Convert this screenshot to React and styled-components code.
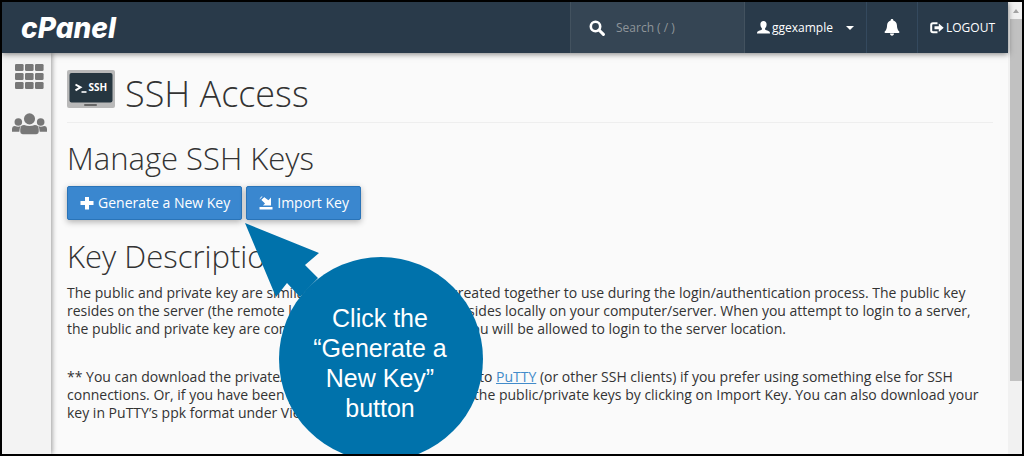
import styled, { createGlobalStyle } from "styled-components";

const GlobalStyle = createGlobalStyle`
  * {
    box-sizing: border-box;
  }
  body {
    margin: 0;
    background: #fafafa;
    color: #333;
    font-family: "Open Sans", "Noto Sans", sans-serif;
    font-size: 14px;
    line-height: 18px;
  }
`;

const Frame = styled.div`
  display: flex;
  height: 100vh;
  border: 2px solid #000;
  overflow: hidden;
`;

const Page = styled.div`
  flex: 1;
  min-width: 0;
  display: flex;
  flex-direction: column;
`;

const Header = styled.header`
  position: relative;
  z-index: 1;
  display: flex;
  flex: none;
  height: 51px;
  background: #293a4a;
  color: #fff;
  box-shadow: 0 1px 6px rgba(0, 0, 0, 0.5);
`;

const Brand = styled.a`
  display: flex;
  align-items: center;
  margin-right: auto;
  padding-left: 19px;
  color: #fff;
  font-family: Inter, sans-serif;
  font-size: 28px;
  font-style: italic;
  font-weight: 800;
  text-decoration: none;
`;

const Search = styled.label`
  display: flex;
  align-items: center;
  gap: 11px;
  width: 175px;
  padding-left: 18px;
  background: #354554;
  border: solid #43525f;
  border-width: 0 1px;
`;

const SearchInput = styled.input`
  flex: 1;
  min-width: 0;
  padding: 0;
  border: 0;
  outline: 0;
  background: transparent;
  color: #fff;
  font: inherit;
  font-size: 12px;

  &::placeholder {
    color: #8f959a;
    opacity: 1;
  }
`;

const HeaderButton = styled.button`
  display: flex;
  align-items: center;
  justify-content: center;
  gap: 2px;
  width: ${({ $width }) => $width};
  padding: 0;
  border: 0;
  border-right: 1px solid ${({ $last }) => ($last ? "transparent" : "#34495e")};
  background: none;
  color: #fff;
  font: inherit;
  font-size: 12px;
  text-decoration: none;
`;

const UserName = styled.span`
  margin-right: 11px;
`;

const Body = styled.div`
  flex: 1;
  min-height: 0;
  display: flex;
`;

const Sidebar = styled.nav`
  display: flex;
  flex: none;
  flex-direction: column;
  align-items: center;
  gap: 24px;
  width: 49px;
  padding: 11px 0 0 6px;
  background: #f3f3f3;
  box-shadow: 1px 0 5px rgba(0, 0, 0, 0.4);
`;

const SidebarLink = styled.a`
  display: flex;
  color: #777;
`;

const Main = styled.main`
  position: relative;
  flex: 1;
  min-width: 0;
  padding: 17px 15px 0 16px;
`;

const TitleBar = styled.div`
  display: flex;
  gap: 10px;
  height: 53px;
  margin-bottom: 19px;
  border-bottom: 1px solid #eee;
`;

const Title = styled.h1`
  margin: 4px 0 0;
  font-size: 36px;
  font-weight: 300;
  line-height: 40px;
`;

const Heading = styled.h2`
  margin: 0 0 11px;
  font-size: 31px;
  font-weight: 300;
  line-height: 33px;
`;

const Buttons = styled.div`
  display: flex;
  gap: 4px;
  margin-bottom: 20px;
`;

const Button = styled.button`
  display: flex;
  align-items: center;
  gap: 4px;
  height: 34px;
  padding: 0 11px 0 12px;
  border: 1px solid #2a74b8;
  border-radius: 2px;
  background: #3a87cf;
  color: #fff;
  font: inherit;
  box-shadow: 0 2px 6px rgba(0, 0, 0, 0.3);
`;

const Paragraph = styled.p`
  margin: 0 0 30px;
`;

const PuttyLink = styled.a`
  color: #428bca;
  text-decoration: underline;
`;

const Callout = styled.div`
  position: absolute;
  top: 170px;
  left: 194px;
  width: 238px;
  height: 238px;
`;

const CalloutText = styled.div`
  position: absolute;
  top: 80px;
  left: 33px;
  width: 204px;
  color: #fff;
  font-family: "Liberation Sans", Arial, sans-serif;
  font-size: 25px;
  line-height: 30px;
  text-align: center;
`;

const ScrollTrack = styled.div`
  display: flex;
  flex: none;
  flex-direction: column;
  align-items: center;
  width: 14px;
  padding-left: 2px;
  background: #f1f1f1;
`;

const ScrollArrow = styled.svg`
  flex: none;
  margin: 7px 0 6px;
`;

const ScrollThumb = styled.div`
  width: 12px;
  height: 80%;
  background: #c1c1c1;
`;

const SearchIcon = () => (
  <svg width="16" height="16" viewBox="0 0 16 16" aria-hidden="true">
    <circle cx="6.5" cy="6.5" r="4.7" fill="none" stroke="#fff" strokeWidth="2.6" />
    <path d="M10 10l4.4 4.4" stroke="#fff" strokeWidth="3" strokeLinecap="round" />
  </svg>
);

const UserIcon = () => (
  <svg width="13" height="13" viewBox="0 0 13 13" fill="currentColor" aria-hidden="true">
    <path d="M6.5 0C4.5 0 3.4 1.3 3.4 3.2c0 1.8.6 3.2 1.5 4.1v1.2C4.7 9 .9 9.7.3 11.1c-.2.5-.3 1-.3 1.4h13c0-.4-.1-.9-.3-1.4-.6-1.4-4.4-2.1-4.6-2.6V7.3c.9-.9 1.5-2.3 1.5-4.1C9.6 1.3 8.5 0 6.5 0z" />
  </svg>
);

const CaretIcon = () => (
  <svg width="8" height="4" viewBox="0 0 8 4" fill="currentColor" aria-hidden="true">
    <path d="M0 0h8L4 4z" />
  </svg>
);

const BellIcon = () => (
  <svg width="16" height="17" viewBox="0 0 16 17" fill="currentColor" aria-hidden="true">
    <path d="M8 0c.8 0 1.3.5 1.3 1.4C11.6 2 12.7 3.7 12.9 6c.2 3.2.7 5 2.1 6.2.7.6.6 1.8-.4 1.8H1.4c-1 0-1.1-1.2-.4-1.8C2.4 11 2.9 9.2 3.1 6c.2-2.3 1.3-4 3.6-4.6C6.7.5 7.2 0 8 0zM6 14.5h4c0 1.3-.8 2.2-2 2.2s-2-.9-2-2.2z" />
  </svg>
);

const LogoutIcon = () => (
  <svg width="14" height="12" viewBox="0 0 14 12" aria-hidden="true">
    <path d="M7.5 1.2H3Q1.2 1.2 1.2 3v5.5q0 1.8 1.8 1.8h4.5" fill="none" stroke="#fff" strokeWidth="2" />
    <path d="M4.5 4.3h4.3V1.5l4.9 4.3L8.8 10V7.3H4.5z" fill="#fff" />
  </svg>
);

const GridIcon = () => (
  <svg width="29" height="25" viewBox="0 0 29 25" fill="currentColor" aria-hidden="true">
    {[0, 9, 18].map(y =>
      [0, 10, 20].map(x => <rect key={`${x}-${y}`} x={x} y={y} width="8.6" height="7" rx="1.3" />)
    )}
  </svg>
);

const GroupIcon = () => (
  <svg width="35" height="22" viewBox="0 0 36 22" fill="currentColor" aria-hidden="true">
    <circle cx="6.5" cy="9" r="3.9" />
    <circle cx="29.5" cy="9" r="3.9" />
    <path d="M0 19v-2.5Q0 13 3 13q3.5 1.5 6 0-1.5 2-1.5 6zM36 19v-2.5Q36 13 33 13q-3.5 1.5-6 0 1.5 2 1.5 6z" />
    <circle cx="18" cy="5.7" r="5.7" />
    <path d="M8.5 19v-2.5q0-4.5 4-4.5 5.5 2 11 0 4 0 4 4.5V19q0 2.5-2.5 2.5H11q-2.5 0-2.5-2.5z" />
  </svg>
);

const TerminalIcon = () => (
  <svg width="48" height="38" viewBox="0 0 48 38" aria-hidden="true">
    <rect width="48" height="38" rx="2" fill="#b9b9b9" />
    <rect x="2.5" y="3" width="43" height="29.5" rx="2" fill="#263640" />
    <rect x="17" y="34" width="13" height="2" rx="1" fill="#666" />
    <path d="M8.5 14.5l5 2.8-5 3" fill="none" stroke="#fff" strokeWidth="2" />
    <path d="M14.5 22h5" stroke="#fff" strokeWidth="1.6" />
    <text x="21.5" y="21" fill="#fff" fontFamily="Open Sans" fontSize="10" fontWeight="700">
      SSH
    </text>
  </svg>
);

const PlusIcon = () => (
  <svg width="14" height="14" viewBox="0 0 14 14" fill="currentColor" aria-hidden="true">
    <path d="M5 1h4v4h4.5v4H9v4.5H5V9H.5V5H5z" />
  </svg>
);

const ImportIcon = () => (
  <svg width="14" height="14" viewBox="0 0 14 14" fill="currentColor" aria-hidden="true">
    <path d="M.5 11h13v2.6H.5zM12 1.5v8H4l2-2L2.2 3.7 5 .9l4.4 3.4z" />
    <path d="M1.2 4.2L5.8 0" stroke="#3a87cf" strokeWidth="1" />
    <path d="M.8 2.7L3.3.4" stroke="#fff" strokeWidth="1" />
  </svg>
);

const App = () => (
  <>
    <GlobalStyle />
    <Frame>
      <Page>
        <Header>
          <Brand href="#">cPanel</Brand>
          <Search>
            <SearchIcon />
            <SearchInput type="text" placeholder="Search ( / )" aria-label="Search" />
          </Search>
          <HeaderButton $width="122px">
            <UserIcon />
            <UserName>ggexample</UserName>
            <CaretIcon />
          </HeaderButton>
          <HeaderButton $width="51px" aria-label="Notifications">
            <BellIcon />
          </HeaderButton>
          <HeaderButton as="a" href="#" $width="90px" $last>
            <LogoutIcon />
            LOGOUT
          </HeaderButton>
        </Header>
        <Body>
          <Sidebar>
            <SidebarLink href="#" aria-label="Tools">
              <GridIcon />
            </SidebarLink>
            <SidebarLink href="#" aria-label="User Manager">
              <GroupIcon />
            </SidebarLink>
          </Sidebar>
          <Main>
            <TitleBar>
              <TerminalIcon />
              <Title>SSH Access</Title>
            </TitleBar>
            <Heading>Manage SSH Keys</Heading>
            <Buttons>
              <Button>
                <PlusIcon />
                Generate a New Key
              </Button>
              <Button>
                <ImportIcon />
                Import Key
              </Button>
            </Buttons>
            <Heading>Key Description</Heading>
            <Paragraph>
              The public and private key are similar to a puzzle. They are created together to use
              during the login/authentication process. The public key resides on the server (the
              remote location). The private key resides locally on your computer/server. When you
              attempt to login to a server, the public and private key are compared. If they both
              match, you will be allowed to login to the server location.
            </Paragraph>
            <Paragraph>
              ** You can download the private/public keys, and import them to{" "}
              <PuttyLink href="#">PuTTY</PuttyLink> (or other SSH clients) if you prefer using
              something else for SSH connections. Or, if you have been provided a key, you can add
              the public/private keys by clicking on Import Key. You can also download your key in
              PuTTY’s ppk format under View/Download.
            </Paragraph>
            <Callout>
              <svg width="238" height="238" viewBox="0 0 238 238" fill="#0072ab" aria-hidden="true">
                <path d="M0 0l74 30-14 12 13 13-18 19-13-14-11 14z" />
                <circle cx="136" cy="136" r="102" />
              </svg>
              <CalloutText>
                Click the
                <br />
                “Generate a
                <br />
                New Key”
                <br />
                button
              </CalloutText>
            </Callout>
          </Main>
        </Body>
      </Page>
      <ScrollTrack aria-hidden="true">
        <ScrollArrow width="6" height="4" viewBox="0 0 6 4">
          <path d="M0 4h6L3 0z" fill="#a3a3a3" />
        </ScrollArrow>
        <ScrollThumb />
      </ScrollTrack>
    </Frame>
  </>
);

export default App;
